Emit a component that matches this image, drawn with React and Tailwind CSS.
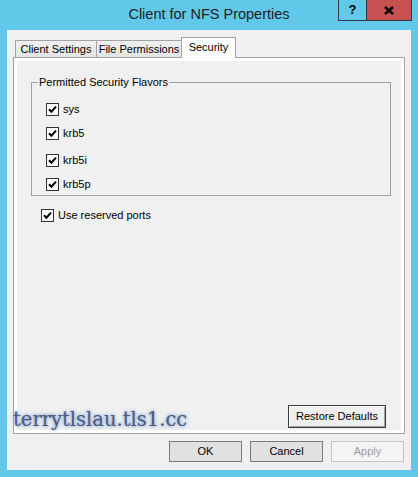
import React from 'react';

const Check = () => (
  <span className="w-[13px] h-[13px] border border-[#333333] bg-white flex items-center justify-center shrink-0">
    <svg width="11" height="11" viewBox="0 0 11 11">
      <path d="M2 5.2 L4.4 7.7 L9 2.6" fill="none" stroke="#000" strokeWidth="2" />
    </svg>
  </span>
);

const CheckRow = ({ label, className = '' }) => (
  <div className={`flex items-center gap-[4px] h-[13px] ${className}`}>
    <Check />
    <span className="text-[11px] leading-[13px] text-black">{label}</span>
  </div>
);

const Tab = ({ label, active, className = '' }) => (
  <div
    className={`flex items-center justify-center text-[11px] text-black border-t border-[#a3a3a3] ${
      active ? 'h-[21px] -mb-px bg-white relative z-10 pb-[2px]' : 'h-[17px] bg-linear-to-b from-[#f0f0f0] to-[#e4e4e4]'
    } ${className}`}
  >
    {label}
  </div>
);

const Btn = ({ label, disabled }) => (
  <button
    className={`w-[73px] h-[21px] border text-[11px] flex items-center justify-center ${
      disabled ? 'border-[#c4c4c4] bg-[#f4f4f4] text-[#9d9d9d]' : 'border-[#7a7a7a] bg-[#e1e1e1] text-black'
    }`}
  >
    {label}
  </button>
);

export default function App() {
  return (
    <div className="relative w-[418px] h-[477px] bg-[#62c8ea] flex flex-col font-['Liberation_Sans',Arial,sans-serif] select-none">
      {/* title bar */}
      <div className="relative h-[30px] flex items-center justify-center">
        <span className="text-[14.5px] text-[#1e1e1e]">Client for NFS Properties</span>
        <div className="absolute top-0 right-[6px] flex">
          <div className="w-[28px] h-[21px] border-l border-b border-[#2f3a40] flex items-center justify-center text-[13px] font-bold text-black leading-none pb-[1px]">
            ?
          </div>
          <div className="w-[46px] h-[21px] border-l border-b border-r border-[#2f3a40] bg-[#c75050] flex items-center justify-center">
            <svg width="10" height="9" viewBox="0 0 10 9">
              <path d="M1 1 L9 8 M9 1 L1 8" stroke="#000" strokeWidth="2.4" />
            </svg>
          </div>
        </div>
      </div>

      {/* client area */}
      <div className="mx-[7px] h-[440px] bg-[#f0f0f0] flex flex-col px-[6px] pt-[7px]">
        <div className="flex items-end h-[20px] pl-[2px]">
          <Tab label="Client Settings" className="w-[82px] border-l border-r" />
          <Tab label="File Permissions" className="w-[85px] border-r" />
          <Tab label="Security" active className="w-[55px] -ml-px border-l border-r" />
        </div>

        <div className="h-[377px] border border-[#a3a3a3] bg-white p-[3px] flex">
          <div className="flex-1 bg-[#f0f0f0] flex flex-col pt-[15px]">
            <fieldset className="ml-[14px] w-[360px] border border-[#a0a0a0] pl-[6px] pb-[4px]">
              <legend className="px-[1px] text-[11px] leading-[13px] text-black">Permitted Security Flavors</legend>
              <CheckRow label="sys" className="ml-[8px] mt-[14px]" />
              <CheckRow label="krb5" className="ml-[8px] mt-[11px]" />
              <CheckRow label="krb5i" className="ml-[8px] mt-[14px]" />
              <CheckRow label="krb5p" className="ml-[8px] mt-[11px]" />
            </fieldset>

            <CheckRow label="Use reserved ports" className="ml-[24px] mt-[13px]" />

            <button className="mt-auto mb-[2px] mr-[15px] self-end w-[98px] h-[23px] border border-[#3c3c3c] bg-[#f0f0f0] shadow-[inset_1px_1px_0_#ffffff,inset_-1px_-1px_0_#a0a0a0] text-[11px] text-black flex items-center justify-center">
              Restore Defaults
            </button>
          </div>
        </div>

        <div className="flex justify-end gap-[8px] mt-[7px] mr-[1px]">
          <Btn label="OK" />
          <Btn label="Cancel" />
          <Btn label="Apply" disabled />
        </div>
      </div>

      {/* watermark */}
      <div className="absolute left-[13px] top-[410px] font-['DejaVu_Serif',serif] text-[19.5px] leading-[19.5px] text-[#4a5b80] [text-shadow:0_0_4px_#7f9bcc,0_0_2px_#9fb4d8] pointer-events-none">
        terrytlslau.tls1.cc
      </div>
    </div>
  );
}
